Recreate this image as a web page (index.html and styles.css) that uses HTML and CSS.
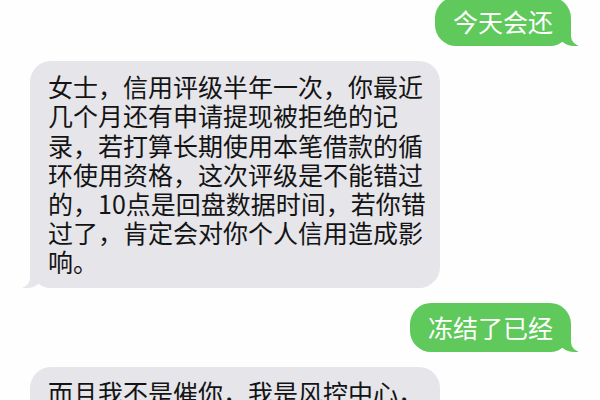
FILE: index.html
```html
<!DOCTYPE html>
<html lang="zh-CN">
<head>
<meta charset="utf-8">
<title>信息</title>
<link rel="stylesheet" href="styles.css">
</head>
<body>
<div class="thread">
  <div class="msg sent first">今天会还</div>
  <div class="msg recv">女士，信用评级半年一次，你最近几个月还有申请提现被拒绝的记录，若打算长期使用本笔借款的循环使用资格，这次评级是不能错过的，10点是回盘数据时间，若你错过了，肯定会对你个人信用造成影响。</div>
  <div class="msg sent">冻结了已经</div>
  <div class="msg recv">而且我不是催你，我是风控中心，</div>
</div>
</body>
</html>
```
FILE: styles.css
```css
html, body {
  margin: 0;
  padding: 0;
  background: #fefefe;
}
body {
  width: 600px;
  height: 400px;
  overflow: hidden;
  font-family: "Noto Sans CJK SC", "Noto Sans", sans-serif;
}
.thread {
  display: flex;
  flex-direction: column;
  gap: 15px;
}
.msg {
  position: relative;
  font-size: 25px;
  line-height: 29.2px;
  padding: 10px 18px;
  border-radius: 21px;
  box-sizing: border-box;
}
.first {
  margin-top: -3px;
}
.sent {
  align-self: flex-end;
  margin-right: 29px;
  background: #5fc95c;
  color: #ffffff;
}
.recv {
  align-self: flex-start;
  margin-left: 30px;
  width: 410px;
  padding: 11px 14px 11px 18px;
  background: #e5e5ea;
  color: #141414;
}
.sent::before,
.sent::after,
.recv::before,
.recv::after {
  content: "";
  position: absolute;
  bottom: 0;
  height: 20px;
}
.sent::before {
  right: -7px;
  width: 20px;
  background: #5fc95c;
  border-bottom-left-radius: 16px 14px;
}
.sent::after {
  right: -26px;
  width: 26px;
  background: #fefefe;
  border-bottom-left-radius: 10px;
}
.recv::before {
  left: -7px;
  width: 20px;
  background: #e5e5ea;
  border-bottom-right-radius: 16px 14px;
}
.recv::after {
  left: -26px;
  width: 26px;
  background: #fefefe;
  border-bottom-right-radius: 10px;
}
```
